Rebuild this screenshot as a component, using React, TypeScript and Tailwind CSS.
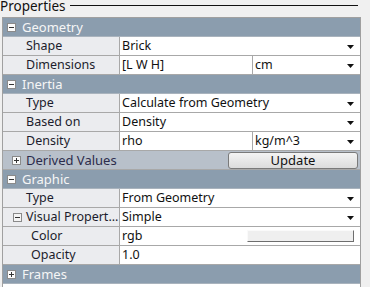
import React from "react";

type RowProps = {
  label: string;
  value?: string;
  unit?: string;
  drop?: boolean;
  unitDrop?: boolean;
  indent?: boolean;
  children?: React.ReactNode;
};

function DropArrow() {
  return (
    <svg width="7" height="5" viewBox="0 0 7 5" className="shrink-0 mt-[2px]">
      <path d="M0 0 H7 L3.5 4 Z" fill="#111" />
    </svg>
  );
}

function Toggle({ open, light = false }: { open: boolean; light?: boolean }) {
  return (
    <svg width="9" height="9" viewBox="0 0 9 9" className="shrink-0">
      <rect x="0.5" y="0.5" width="8" height="8" fill={light ? "#f4f4f4" : "#fbfbfb"} stroke="#8a8a8a" />
      <path d="M2 4.5 H7" stroke="#333" />
      {!open && <path d="M4.5 2 V7" stroke="#333" />}
    </svg>
  );
}

function Header({ title, open = true }: { title: string; open?: boolean }) {
  return (
    <div className="flex items-center h-[19px] border-b border-[#a9b3bd] bg-[#8b9dae] pl-[4px] gap-[6px]">
      <Toggle open={open} />
      <span className="text-[13px] text-[#f6f6f6] leading-none">{title}</span>
    </div>
  );
}

function Row({ label, value, unit, drop, unitDrop, indent, children }: RowProps) {
  return (
    <div className="flex h-[19px] border-b border-[#a8a8a8]">
      <div
        className={`w-[117px] shrink-0 bg-[#ebecef] border-r border-[#a8a8a8] flex items-center text-[12.5px] text-[#1c1c2c] ${
          indent ? "pl-[28px]" : "pl-[23px]"
        }`}
      >
        {label}
      </div>
      <div className={`bg-white flex items-center ${unit !== undefined ? "w-[133px] border-r border-[#a8a8a8]" : "flex-1 pr-[6px]"}`}>
        <span className="pl-[2px] flex-1 text-[#111]">{value}</span>
        {drop && <DropArrow />}
        {children}
      </div>
      {unit !== undefined && (
        <div className="flex-1 bg-white flex items-center pr-[6px]">
          <span className="pl-[2px] flex-1 text-[#111]">{unit}</span>
          {unitDrop && <DropArrow />}
        </div>
      )}
    </div>
  );
}

export default function App() {
  return (
    <div
      className="w-[370px] h-[287px] bg-[#f0f0f0] overflow-hidden text-[12.5px] leading-none"
      style={{ fontFamily: '"Noto Sans", "Liberation Sans", sans-serif' }}
    >
      <div className="flex items-start h-[17px] overflow-hidden">
        <span className="text-[13.5px] leading-[14px] text-[#111] -mt-[1px] pr-[4px]">Properties</span>
        <div className="flex-1 mr-[12px] mt-[5px] h-px bg-[#111]" />
      </div>
      <div className="ml-[2px] w-[359px] h-[270px] border-l border-r border-t border-[#a0a0a0] bg-white">
        <Header title="Geometry" />
        <Row label="Shape" value="Brick" drop />
        <Row label="Dimensions" value="[L W H]" unit="cm" unitDrop />
        <Header title="Inertia" />
        <Row label="Type" value="Calculate from Geometry" drop />
        <Row label="Based on" value="Density" drop />
        <Row label="Density" value="rho" unit="kg/m^3" unitDrop />
        <div className="flex h-[19px] border-b border-[#a8a8a8] bg-[#b8c0ca]">
          <div className="w-[117px] shrink-0 flex items-center pl-[9px] gap-[5px] border-r border-[#b8c0ca]">
            <Toggle open={false} />
            <span className="text-[13px] text-[#2c2c4c] whitespace-nowrap">Derived Values</span>
          </div>
          <div className="flex-1 flex items-center justify-end pr-[2px]">
            <button className="w-[130px] h-[17px] rounded-[3px] border border-[#7a7a7a] bg-gradient-to-b from-[#f4f4f4] to-[#dcdcdc] text-[13px] text-[#111] leading-none">
              Update
            </button>
          </div>
        </div>
        <Header title="Graphic" />
        <Row label="Type" value="From Geometry" drop />
        <div className="flex h-[19px] border-b border-[#a8a8a8]">
          <div className="w-[117px] shrink-0 bg-[#ebecef] border-r border-[#a8a8a8] flex items-center pl-[10px] gap-[4px] text-[12.5px] text-[#1c1c2c]">
            <Toggle open light />
            <span className="whitespace-nowrap">Visual Propert...</span>
          </div>
          <div className="flex-1 bg-white flex items-center pr-[6px]">
            <span className="pl-[2px] flex-1 text-[#111]">Simple</span>
            <DropArrow />
          </div>
        </div>
        <Row label="Color" value="rgb" indent>
          <div className="w-[107px] h-[12px] bg-[#efefef] border border-t-[#fafafa] border-l-[#fafafa] border-r-[#6e6e6e] border-b-[#6e6e6e]" />
        </Row>
        <Row label="Opacity" value="1.0" indent />
        <Header title="Frames" open={false} />
      </div>
    </div>
  );
}
